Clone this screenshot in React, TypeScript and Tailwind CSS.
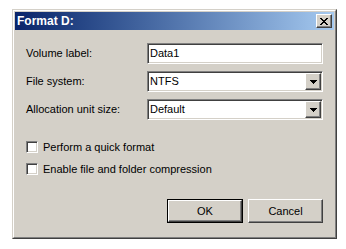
import React from "react";

const font = { fontFamily: '"Liberation Sans", Arial, sans-serif' };

const sunken =
  "border border-t-[#808080] border-l-[#808080] border-r-white border-b-white shadow-[inset_1px_1px_0_#404040,inset_-1px_-1px_0_#d4d0c8]";

const raised =
  "border border-t-white border-l-white border-r-[#404040] border-b-[#404040] shadow-[inset_-1px_-1px_0_#808080]";

function CloseGlyph() {
  const px = [
    [0, 0], [1, 0], [6, 0], [7, 0],
    [1, 1], [2, 1], [5, 1], [6, 1],
    [2, 2], [3, 2], [4, 2], [5, 2],
    [3, 3], [4, 3],
    [2, 4], [3, 4], [4, 4], [5, 4],
    [1, 5], [2, 5], [5, 5], [6, 5],
    [0, 6], [1, 6], [6, 6], [7, 6],
  ];
  return (
    <svg width="8" height="7" viewBox="0 0 8 7" shapeRendering="crispEdges">
      {px.map(([x, y]) => (
        <rect key={`${x}-${y}`} x={x} y={y} width="1" height="1" fill="#000" />
      ))}
    </svg>
  );
}

function Arrow() {
  return (
    <svg width="7" height="4" viewBox="0 0 7 4" shapeRendering="crispEdges">
      <rect x="0" y="0" width="7" height="1" fill="#000" />
      <rect x="1" y="1" width="5" height="1" fill="#000" />
      <rect x="2" y="2" width="3" height="1" fill="#000" />
      <rect x="3" y="3" width="1" height="1" fill="#000" />
    </svg>
  );
}

function Combo({ value }: { value: string }) {
  return (
    <div className={`flex h-[21px] w-[176px] items-center bg-white ${sunken}`}>
      <span className="flex-1 pl-[2px] text-[11px]">{value}</span>
      <div
        className={`mr-[1px] flex h-[17px] w-[16px] items-center justify-center bg-[#d4d0c8] ${raised}`}
      >
        <Arrow />
      </div>
    </div>
  );
}

function Row({ label, children }: { label: string; children: React.ReactNode }) {
  return (
    <div className="flex h-[21px] items-center">
      <span className="w-[121px] text-[11px]">{label}</span>
      {children}
    </div>
  );
}

function Check({ label }: { label: string }) {
  return (
    <div className="flex h-[22px] items-center">
      <div className={`mr-[5px] h-[12px] w-[12px] bg-white ${sunken}`} />
      <span className="text-[11px]">{label}</span>
    </div>
  );
}

export default function App() {
  return (
    <div className="min-h-screen bg-white pl-[12px] pt-[9px]" style={font}>
      <div className="h-[230px] w-[325px] border border-t-[#d4d0c8] border-l-[#d4d0c8] border-r-[#404040] border-b-[#404040]">
        <div className="flex h-full flex-col border border-t-white border-l-white border-r-[#808080] border-b-[#808080] bg-[#d4d0c8] p-[1px]">
          <div className="flex h-[18px] items-center justify-between bg-gradient-to-r from-[#0a246a] to-[#a6caf0] pl-[2px] pr-[2px]">
            <span className="text-[12px] font-bold text-white">Format D:</span>
            <div
              className={`flex h-[14px] w-[16px] items-center justify-center bg-[#d4d0c8] ${raised}`}
            >
              <CloseGlyph />
            </div>
          </div>

          <div className="flex flex-1 flex-col pl-[11px] pr-[11px] pt-[13px] text-black">
            <div className="flex flex-col gap-[7px]">
              <Row label="Volume label:">
                <div className={`flex h-[21px] w-[176px] items-center bg-white pl-[2px] ${sunken}`}>
                  <span className="text-[11px]">Data1</span>
                </div>
              </Row>
              <Row label="File system:">
                <Combo value="NTFS" />
              </Row>
              <Row label="Allocation unit size:">
                <Combo value="Default" />
              </Row>
            </div>

            <div className="mt-[16px] flex flex-col">
              <Check label="Perform a quick format" />
              <Check label="Enable file and folder compression" />
            </div>

            <div className="mt-[19px] flex justify-end gap-[5px]">
              <div className="h-[24px] w-[76px] border border-black">
                <div
                  className={`flex h-full w-full items-center justify-center bg-[#d4d0c8] text-[11px] ${raised}`}
                >
                  OK
                </div>
              </div>
              <div
                className={`flex h-[24px] w-[75px] items-center justify-center bg-[#d4d0c8] text-[11px] ${raised}`}
              >
                Cancel
              </div>
            </div>
          </div>
        </div>
      </div>
    </div>
  );
}
